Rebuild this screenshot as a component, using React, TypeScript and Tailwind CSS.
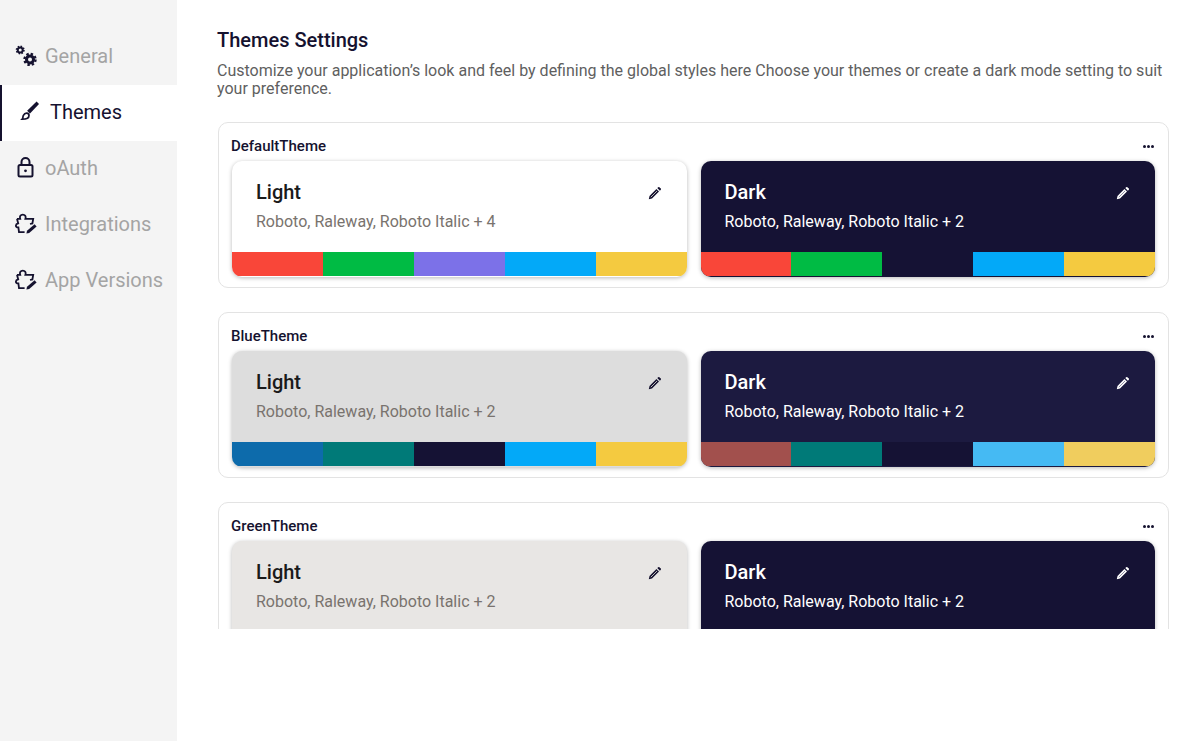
import React from "react";

const font = { fontFamily: "Roboto, sans-serif" };

const GearsIcon = () => (
  <svg width="24" height="24" viewBox="0 0 24 24" fill="none" stroke="#15122f" className="shrink-0">
    <circle cx="5.2" cy="6" r="2.5" strokeWidth="2" />
    <circle cx="5.2" cy="6" r="3.7" strokeWidth="1.6" strokeDasharray="1.5 1.4" />
    <circle cx="15" cy="15.4" r="3.5" strokeWidth="3" />
    <circle cx="15" cy="15.4" r="5.6" strokeWidth="2.2" strokeDasharray="2.4 2" />
  </svg>
);

const BrushIcon = () => (
  <svg width="24" height="24" viewBox="0 0 24 24" className="shrink-0">
    <path d="M18.6 1.6l2.4 2.4-9 9.4-2.9-2.7z" fill="#15122f" />
    <path
      d="M8.8 13.2c1.4.1 2.2 1 2.2 2.2 0 2.4-2.6 3.8-6.8 3.8 1-1 .4-2.2 1.2-3.8.6-1.2 2-2.3 3.4-2.2z"
      fill="none"
      stroke="#15122f"
      strokeWidth="1.7"
    />
  </svg>
);

const LockIcon = () => (
  <svg width="24" height="24" viewBox="0 0 24 24" fill="none" stroke="#15122f" strokeWidth="2" className="shrink-0">
    <rect x="3.5" y="9" width="14" height="11.5" rx="1.5" />
    <path d="M6.5 9V6a4 4 0 018 0v3" />
    <circle cx="10.5" cy="14.8" r="1.4" fill="#15122f" stroke="none" />
  </svg>
);

const PuzzleIcon = () => (
  <svg width="24" height="24" viewBox="0 0 24 24" fill="none" className="shrink-0">
    <path
      d="M2 6.8h3.2C4.4 4.4 5.6 2.6 7.8 2.6s3.4 1.8 2.6 4.2h7.8l-.8 4.6-2.4.6M2 6.8l1.2 4.6c-3.2.8-3 4.4.2 4l.6 4.8h5.6"
      stroke="#15122f"
      strokeWidth="1.8"
      strokeLinejoin="miter"
    />
    <path d="M11.4 21.6l.6-2.8 7.6-6.6 2 2.2-7.4 6.6z" fill="#15122f" />
  </svg>
);

const PencilIcon = ({ color }: { color: string }) => (
  <svg width="14" height="14" viewBox="0 0 14 14" className="shrink-0">
    <path d="M.8 13.2l.7-3.2 6.9-7 2.6 2.6-7 6.9z" fill={color} />
    <path d="M9.3 2.1l.9-.9a.9.9 0 011.2 0l1.4 1.4a.9.9 0 010 1.2l-.9.9z" fill={color} />
    <path d="M2.8 11.2l6.3-6.3" stroke={color === "#ffffff" ? "#8f8da3" : "#b9b9b9"} strokeWidth="1" />
  </svg>
);

type NavItem = { label: string; icon: React.ReactNode; active?: boolean };

const navItems: NavItem[] = [
  { label: "General", icon: <GearsIcon /> },
  { label: "Themes", icon: <BrushIcon />, active: true },
  { label: "oAuth", icon: <LockIcon /> },
  { label: "Integrations", icon: <PuzzleIcon /> },
  { label: "App Versions", icon: <PuzzleIcon /> },
];

type ModeCard = {
  title: string;
  fonts: string;
  bg: string;
  titleClass: string;
  fontsClass: string;
  pencil: string;
  colors: string[];
};

const darkText = "text-[#1a1a1a]";
const greyText = "text-[#79736e]";

const themes: { name: string; light: ModeCard; dark: ModeCard }[] = [
  {
    name: "DefaultTheme",
    light: {
      title: "Light",
      fonts: "Roboto, Raleway, Roboto Italic + 4",
      bg: "bg-white",
      titleClass: darkText,
      fontsClass: greyText,
      pencil: "#15122f",
      colors: ["bg-[#f94639]", "bg-[#00bb44]", "bg-[#7c71e8]", "bg-[#03a9f8]", "bg-[#f4ca40]"],
    },
    dark: {
      title: "Dark",
      fonts: "Roboto, Raleway, Roboto Italic + 2",
      bg: "bg-[#151234]",
      titleClass: "text-white",
      fontsClass: "text-white",
      pencil: "#ffffff",
      colors: ["bg-[#f94639]", "bg-[#00bb44]", "bg-[#151234]", "bg-[#03a9f8]", "bg-[#f4ca40]"],
    },
  },
  {
    name: "BlueTheme",
    light: {
      title: "Light",
      fonts: "Roboto, Raleway, Roboto Italic + 2",
      bg: "bg-[#dddddd]",
      titleClass: darkText,
      fontsClass: greyText,
      pencil: "#15122f",
      colors: ["bg-[#0d6bab]", "bg-[#007a78]", "bg-[#151234]", "bg-[#03a9f8]", "bg-[#f4ca40]"],
    },
    dark: {
      title: "Dark",
      fonts: "Roboto, Raleway, Roboto Italic + 2",
      bg: "bg-[#1c1a40]",
      titleClass: "text-white",
      fontsClass: "text-white",
      pencil: "#ffffff",
      colors: ["bg-[#a2504d]", "bg-[#007a78]", "bg-[#151234]", "bg-[#45baf3]", "bg-[#f0cd5e]"],
    },
  },
  {
    name: "GreenTheme",
    light: {
      title: "Light",
      fonts: "Roboto, Raleway, Roboto Italic + 2",
      bg: "bg-[#e8e6e4]",
      titleClass: darkText,
      fontsClass: greyText,
      pencil: "#15122f",
      colors: [],
    },
    dark: {
      title: "Dark",
      fonts: "Roboto, Raleway, Roboto Italic + 2",
      bg: "bg-[#151234]",
      titleClass: "text-white",
      fontsClass: "text-white",
      pencil: "#ffffff",
      colors: [],
    },
  },
];

const Mode = ({ card }: { card: ModeCard }) => (
  <div className={`flex-1 h-[116px] rounded-[10px] overflow-hidden flex flex-col shadow-[0_1px_4px_rgba(0,0,0,0.28)] ${card.bg}`}>
    <div className="h-[91px] shrink-0 pl-[24px] pr-[25px] pt-[18px] flex justify-between items-start">
      <div>
        <div className={`text-[20px] leading-[26px] font-medium ${card.titleClass}`}>{card.title}</div>
        <div className={`mt-[5px] text-[16px] leading-[24px] ${card.fontsClass}`}>{card.fonts}</div>
      </div>
      <div className="pt-[7px]">
        <PencilIcon color={card.pencil} />
      </div>
    </div>
    <div className="flex h-[24px]">
      {card.colors.map((c, i) => (
        <div key={i} className={`flex-1 ${c}`} />
      ))}
    </div>
  </div>
);

export default function App() {
  return (
    <div className="flex h-[741px] w-full bg-white overflow-hidden" style={font}>
      <aside className="w-[177px] shrink-0 bg-[#f4f4f4] pt-[29px]">
        {navItems.map((item) =>
          item.active ? (
            <div key={item.label} className="h-[56px] bg-white border-l-2 border-[#15122f] flex items-center gap-[8px] pl-[16px] pb-[2px]">
              {item.icon}
              <span className="text-[20px] text-[#15122f]">{item.label}</span>
            </div>
          ) : (
            <div key={item.label} className="h-[56px] flex items-center gap-[6px] pl-[14px] pb-[2px]">
              <span className="flex w-[25px] justify-center">{item.icon}</span>
              <span className="text-[20px] text-[#a4a4a4]">{item.label}</span>
            </div>
          )
        )}
      </aside>
      <main className="flex-1 pl-[40px] pr-[32px] pt-[27px]">
        <h1 className="text-[20px] leading-[26px] font-medium text-[#15122f]">Themes Settings</h1>
        <p className="mt-[9px] text-[16px] leading-[18px] text-[#5f5f5f]">
          Customize your application’s look and feel by defining the global styles here Choose your themes or create a dark mode setting to suit your preference.
        </p>
        <div className="mt-[24px] h-[507px] overflow-hidden flex flex-col gap-[24px] pl-[1px]">
          {themes.map((t) => (
            <section key={t.name} className="h-[166px] shrink-0 rounded-[10px] border border-[#e3e3e3] px-[13px] pt-[13px]">
              <div className="flex items-center justify-between h-[20px] pr-[1px]">
                <span className="text-[15px] font-medium text-[#15122f] -ml-[1px]">{t.name}</span>
                <span className="flex gap-[1px]">
                  <i className="w-[3px] h-[3px] rounded-full bg-[#15122f]" />
                  <i className="w-[3px] h-[3px] rounded-full bg-[#15122f]" />
                  <i className="w-[3px] h-[3px] rounded-full bg-[#15122f]" />
                </span>
              </div>
              <div className="mt-[5px] flex gap-[14px]">
                <Mode card={t.light} />
                <Mode card={t.dark} />
              </div>
            </section>
          ))}
        </div>
      </main>
    </div>
  );
}
